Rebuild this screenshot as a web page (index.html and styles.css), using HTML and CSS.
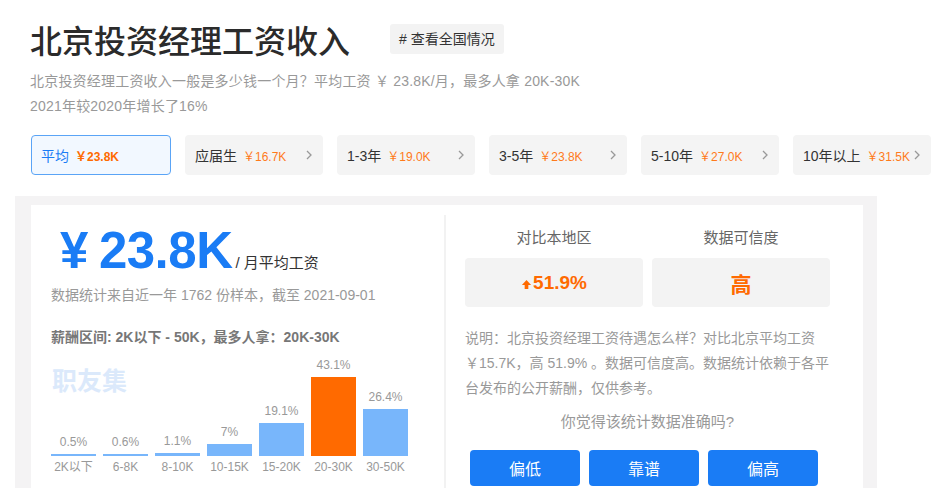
FILE: index.html
```html
<!DOCTYPE html>
<html lang="zh-CN">
<head>
<meta charset="utf-8">
<title>北京投资经理工资收入</title>
<link rel="stylesheet" href="styles.css">
</head>
<body>
<div class="page">
  <div class="head">
    <h1 class="title">北京投资经理工资收入</h1>
    <span class="tag"># 查看全国情况</span>
  </div>
  <p class="intro">北京投资经理工资收入一般是多少钱一个月？平均工资 ￥ 23.8K/月，最多人拿 20K-30K<br>2021年较2020年增长了16%</p>
  <div class="tabs">
    <div class="tab active"><span class="tab-name">平均</span><span class="tab-val">￥23.8K</span></div>
    <div class="tab"><span class="tab-name">应届生</span><span class="tab-val">￥16.7K</span><svg class="chev" viewBox="0 0 8 12"><polyline points="2,2 6,6 2,10"/></svg></div>
    <div class="tab"><span class="tab-name">1-3年</span><span class="tab-val">￥19.0K</span><svg class="chev" viewBox="0 0 8 12"><polyline points="2,2 6,6 2,10"/></svg></div>
    <div class="tab"><span class="tab-name">3-5年</span><span class="tab-val">￥23.8K</span><svg class="chev" viewBox="0 0 8 12"><polyline points="2,2 6,6 2,10"/></svg></div>
    <div class="tab"><span class="tab-name">5-10年</span><span class="tab-val">￥27.0K</span><svg class="chev" viewBox="0 0 8 12"><polyline points="2,2 6,6 2,10"/></svg></div>
    <div class="tab"><span class="tab-name">10年以上</span><span class="tab-val">￥31.5K</span><svg class="chev" viewBox="0 0 8 12"><polyline points="2,2 6,6 2,10"/></svg></div>
  </div>
  <div class="panel">
    <div class="card">
      <div class="left">
        <div class="price-row"><span class="price"><span class="yen">¥</span>23.8K</span><span class="price-unit">/ 月平均工资</span></div>
        <p class="source">数据统计来自近一年 1762 份样本，截至 2021-09-01</p>
        <p class="range">薪酬区间: 2K以下 - 50K，最多人拿：20K-30K</p>
        <div class="chart-wrap">
          <div class="watermark">职友集</div>
          <div class="chart">
            <div class="col"><span class="pct">0.5%</span><div class="bar" style="height:2px"></div><span class="lab">2K以下</span></div>
            <div class="col"><span class="pct">0.6%</span><div class="bar" style="height:2px"></div><span class="lab">6-8K</span></div>
            <div class="col"><span class="pct">1.1%</span><div class="bar" style="height:3px"></div><span class="lab">8-10K</span></div>
            <div class="col"><span class="pct">7%</span><div class="bar" style="height:12px"></div><span class="lab">10-15K</span></div>
            <div class="col"><span class="pct">19.1%</span><div class="bar" style="height:33px"></div><span class="lab">15-20K</span></div>
            <div class="col"><span class="pct">43.1%</span><div class="bar top" style="height:79px"></div><span class="lab">20-30K</span></div>
            <div class="col"><span class="pct">26.4%</span><div class="bar" style="height:47px"></div><span class="lab">30-50K</span></div>
          </div>
        </div>
      </div>
      <div class="divider"></div>
      <div class="right">
        <div class="stats">
          <div class="stat">
            <div class="stat-label">对比本地区</div>
            <div class="stat-box"><svg class="up" viewBox="0 0 12 12"><polygon points="6,1 11,6.5 8,6.5 8,11 4,11 4,6.5 1,6.5"/></svg>51.9%</div>
          </div>
          <div class="stat">
            <div class="stat-label">数据可信度</div>
            <div class="stat-box big">高</div>
          </div>
        </div>
        <p class="desc">说明：北京投资经理工资待遇怎么样？对比北京平均工资<br>￥15.7K，高 51.9% 。数据可信度高。数据统计依赖于各平<br>台发布的公开薪酬，仅供参考。</p>
        <p class="ask">你觉得该统计数据准确吗?</p>
        <div class="btns">
          <button class="btn">偏低</button>
          <button class="btn">靠谱</button>
          <button class="btn">偏高</button>
        </div>
      </div>
    </div>
  </div>
</div>
</body>
</html>
```
FILE: styles.css
```css
html, body {
  margin: 0;
  padding: 0;
  background: #fff;
  overflow: hidden;
}
body {
  font-family: "Liberation Sans", "Noto Sans CJK SC", sans-serif;
  color: #333;
  width: 933px;
  height: 488px;
}
p { margin: 0; }
.page {
  width: 933px;
  overflow: hidden;
  padding: 17px 0 0 0;
}
.head {
  display: flex;
  align-items: center;
  padding-left: 30px;
}
.title {
  margin: 0;
  font-family: "Noto Sans CJK SC", sans-serif;
  font-size: 32px;
  line-height: 44px;
  font-weight: 500;
  color: #2b2b2b;
}
.tag {
  margin-left: 40px;
  height: 30px;
  line-height: 30px;
  padding: 0 9px;
  background: #f3f3f3;
  border-radius: 3px;
  font-size: 14px;
  color: #333;
}
.intro {
  margin-top: 8px;
  padding-left: 30px;
  font-size: 14px;
  line-height: 25px;
  color: #999;
  letter-spacing: 0.2px;
}
.tabs {
  display: flex;
  gap: 14px;
  margin-top: 16px;
  padding-left: 31px;
  overflow: hidden;
}
.tab {
  flex: 0 0 auto;
  box-sizing: border-box;
  width: 138px;
  height: 40px;
  display: flex;
  align-items: center;
  padding: 0 10px;
  background: #f4f4f4;
  border-radius: 4px;
}
.tab.active {
  width: 140px;
  background: #f2f8ff;
  border: 1px solid #5aa4f6;
  padding-left: 9px;
}
.tab-name {
  font-size: 14px;
  color: #333;
}
.tab.active .tab-name { color: #1a7cf5; }
.tab-val {
  margin-left: 6px;
  font-size: 12px;
  color: #ff7a1a;
}
.tab.active .tab-val { font-weight: bold; color: #ff6a00; }
.chev {
  margin-left: auto;
  width: 8px;
  height: 12px;
  fill: none;
  stroke: #999;
  stroke-width: 1.3;
}
.panel {
  margin: 21px 0 0 15px;
  width: 862px;
  height: 300px;
  background: #f4f3f4;
  box-sizing: border-box;
  padding: 9px 14px 0 16px;
}
.card {
  background: #fff;
  height: 300px;
  display: flex;
}
.left {
  width: 413px;
  box-sizing: border-box;
  padding: 20px 0 0 20px;
}
.price-row {
  display: flex;
  align-items: baseline;
}
.price {
  font-size: 51px;
  line-height: 52px;
  font-weight: bold;
  color: #1a7cf5;
  letter-spacing: -0.5px;
}
.yen {
  margin-left: 9px;
  margin-right: 11px;
}
.price-unit {
  margin-left: 3px;
  font-size: 15px;
  color: #333;
}
.source {
  margin-top: 8px;
  font-size: 14px;
  line-height: 20px;
  color: #999;
}
.range {
  margin-top: 22px;
  font-size: 14px;
  line-height: 20px;
  font-weight: bold;
  color: #777;
}
.chart-wrap {
  position: relative;
  margin-top: 4px;
}
.watermark {
  position: absolute;
  left: 1px;
  top: 13px;
  font-family: "Noto Sans CJK SC", sans-serif;
  font-size: 25px;
  font-weight: bold;
  color: #dbe9fb;
  line-height: 30px;
}
.chart {
  display: flex;
  gap: 7px;
  height: 124px;
  align-items: flex-end;
}
.col {
  width: 45px;
  display: flex;
  flex-direction: column;
  align-items: center;
}
.pct {
  font-size: 12px;
  color: #999;
  line-height: 14px;
  margin-bottom: 5px;
}
.bar {
  width: 100%;
  background: #78b6fb;
}
.bar.top { background: #ff6a00; }
.lab {
  margin-top: 3px;
  font-size: 12px;
  line-height: 16px;
  color: #999;
}
.divider {
  width: 2px;
  margin-top: 10px;
  background: #f2f2f2;
}
.right {
  flex: 1;
  padding: 23px 0 0 19px;
}
.stats {
  display: flex;
  gap: 9px;
}
.stat {
  width: 178px;
}
.stat-label {
  text-align: center;
  font-size: 15px;
  line-height: 20px;
  color: #666;
}
.stat-box {
  margin-top: 10px;
  height: 49px;
  background: #f3f3f3;
  border-radius: 4px;
  display: flex;
  align-items: center;
  justify-content: center;
  font-size: 19px;
  font-weight: bold;
  color: #ff6a00;
}
.stat-box.big { font-size: 21px; font-family: "Noto Sans CJK SC", sans-serif; }
.up {
  width: 11px;
  height: 11px;
  fill: #ff6a00;
  margin-right: 1px;
  margin-top: 3px;
}
.desc {
  margin-top: 19px;
  font-size: 14px;
  line-height: 25px;
  color: #999;
}
.ask {
  margin-top: 11px;
  width: 365px;
  text-align: center;
  font-size: 15px;
  line-height: 20px;
  color: #999;
}
.btns {
  display: flex;
  gap: 9px;
  margin-top: 18px;
  padding-left: 5px;
}
.btn {
  width: 110px;
  height: 36px;
  border: none;
  border-radius: 4px;
  background: #1a7cf5;
  color: #fff;
  font-family: "Noto Sans CJK SC", sans-serif;
  font-size: 16px;
  padding: 0;
}
```
